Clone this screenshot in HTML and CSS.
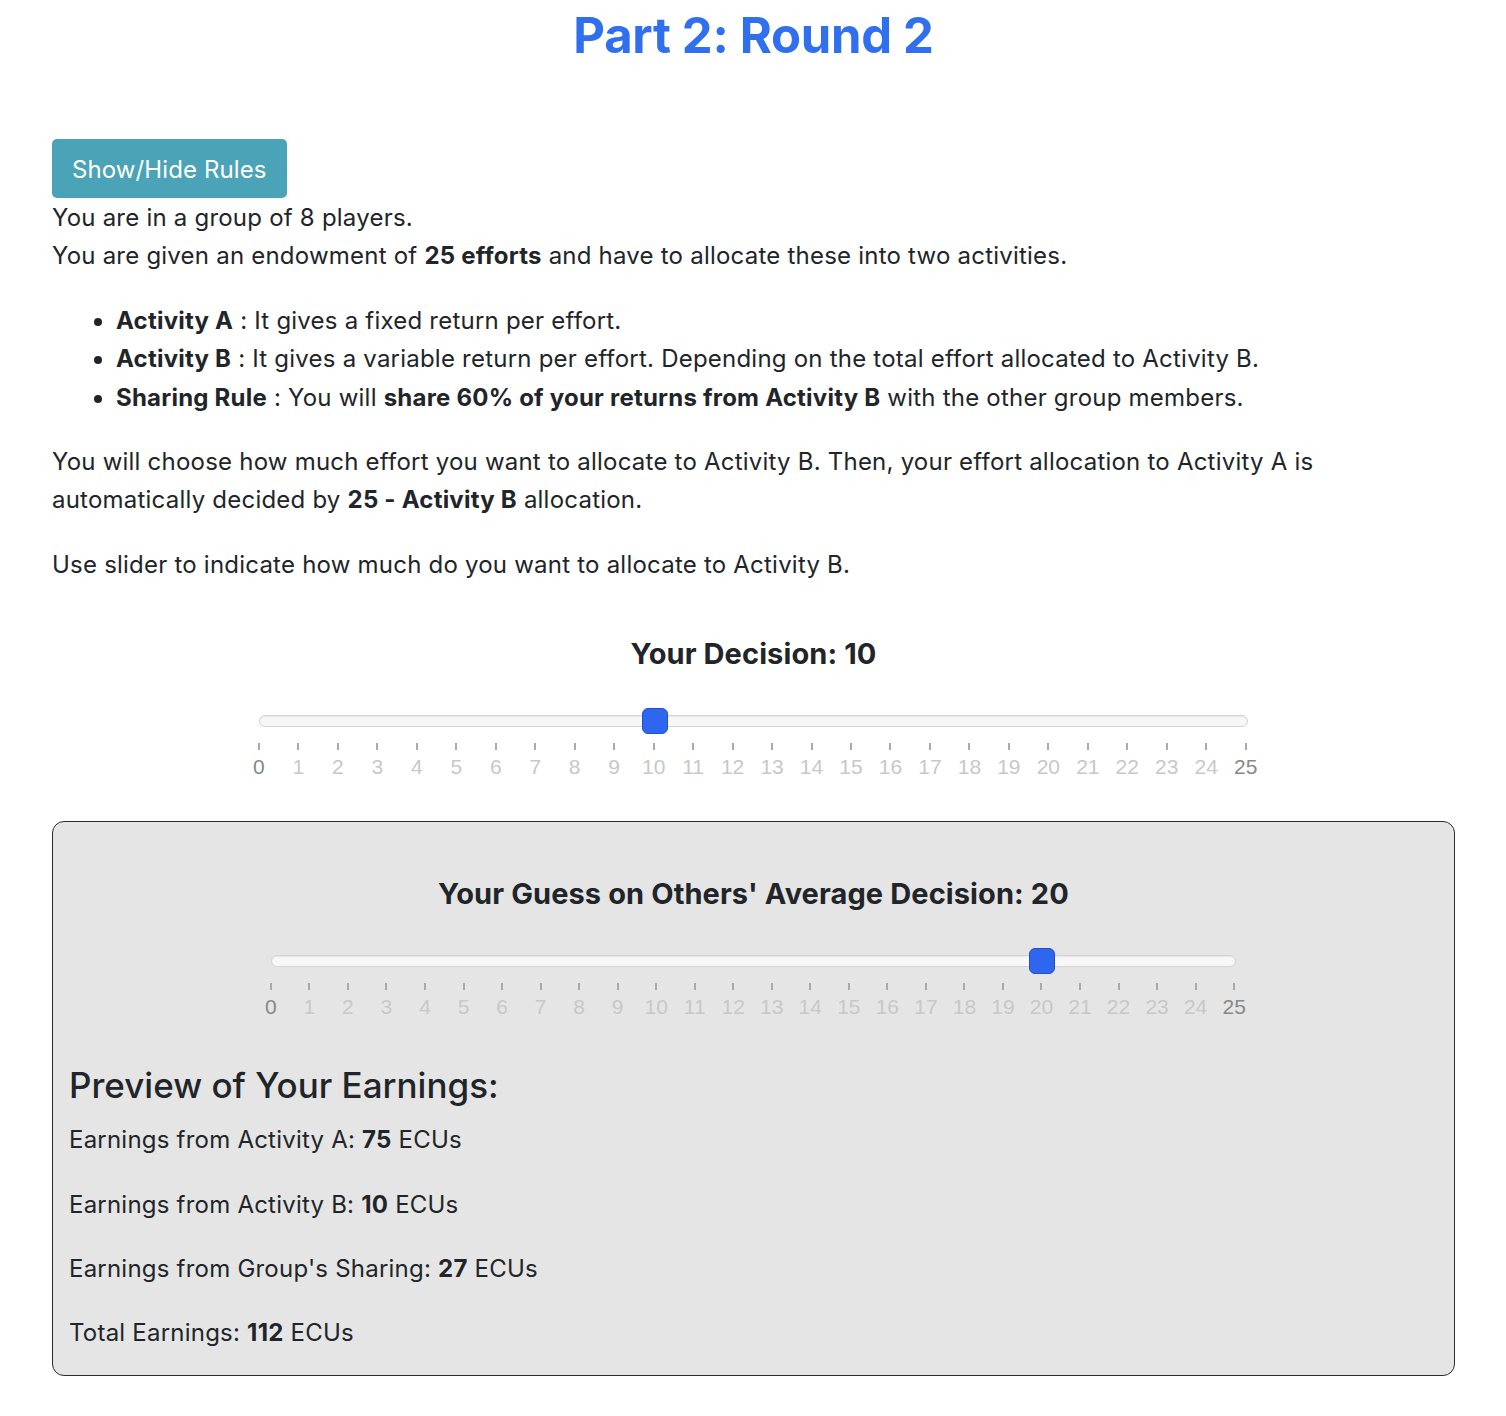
FILE: index.html
```html
<!DOCTYPE html>
<html lang="en">
<head>
<meta charset="utf-8">
<title>Part 2: Round 2</title>
<link rel="stylesheet" href="styles.css">
</head>
<body>
<div class="container">
  <h1 class="page-title">Part 2: Round 2</h1>

  <button class="btn-rules" type="button">Show/Hide Rules</button>

  <div class="rules">
    <p class="intro">You are in a group of 8 players.<br>You are given an endowment of <b>25 efforts</b> and have to allocate these into two activities.</p>
    <ul class="activities">
      <li><b>Activity A</b> : It gives a fixed return per effort.</li>
      <li><b>Activity B</b> : It gives a variable return per effort. Depending on the total effort allocated to Activity B.</li>
      <li><b>Sharing Rule</b> : You will <b>share 60% of your returns from Activity B</b> with the other group members.</li>
    </ul>
    <p>You will choose how much effort you want to allocate to Activity B. Then, your effort allocation to Activity A is automatically decided by <b>25 - Activity B</b> allocation.</p>
    <p>Use slider to indicate how much do you want to allocate to Activity B.</p>
  </div>

  <section class="decision">
    <h2 class="slider-title">Your Decision: <span>10</span></h2>
    <div class="slider">
      <div class="track"><span class="handle" style="left:40%"></span></div>
      <div class="scale" id="scale1"></div>
    </div>
  </section>

  <section class="guess-box">
    <h2 class="slider-title">Your Guess on Others' Average Decision: <span>20</span></h2>
    <div class="slider">
      <div class="track"><span class="handle" style="left:80%"></span></div>
      <div class="scale" id="scale2"></div>
    </div>

    <h3 class="preview-title">Preview of Your Earnings:</h3>
    <p>Earnings from Activity A: <b>75</b> ECUs</p>
    <p>Earnings from Activity B: <b>10</b> ECUs</p>
    <p>Earnings from Group's Sharing: <b>27</b> ECUs</p>
    <p class="last">Total Earnings: <b>112</b> ECUs</p>
  </section>
</div>
<script>
  document.querySelectorAll('.scale').forEach(function (scale) {
    for (var i = 0; i <= 25; i++) {
      var pip = document.createElement('div');
      pip.className = 'pip' + ((i === 0 || i === 25) ? ' pip-end' : '');
      pip.innerHTML = '<span class="tick"></span><span class="num">' + i + '</span>';
      scale.appendChild(pip);
    }
  });
</script>
</body>
</html>
```

FILE: styles.css
```css
* { box-sizing: border-box; }

html, body {
  margin: 0;
  padding: 0;
  background: #ffffff;
}

body {
  font-family: Inter, "Noto Sans", "Liberation Sans", sans-serif;
  font-size: 24px;
  line-height: 38.4px;
  letter-spacing: 0.22px;
  color: #212529;
}

.container {
  padding: 0 51px 0 52px;
}

.page-title {
  margin: 0;
  padding-top: 6px;
  height: 139px;
  text-align: center;
  font-size: 49px;
  line-height: 60px;
  font-weight: 700;
  color: #3070ef;
  letter-spacing: -0.3px;
}

.btn-rules {
  display: block;
  height: 59px;
  padding: 3px 20px 0 20px;
  border: none;
  border-radius: 5px;
  background: #4aa3b6;
  color: #ffffff;
  font-family: inherit;
  font-size: 24px;
  letter-spacing: 0.1px;
  line-height: 56px;
  cursor: pointer;
}

.rules {
  padding-top: 1px;
}

.rules p,
.guess-box p {
  margin: 0 0 26px 0;
}

.guess-box p.last {
  margin-bottom: 22px;
}

.activities {
  margin: 0 0 26px 0;
  padding-left: 64px;
}

b { font-weight: 700; }

.decision {
  padding-top: 28px;
  padding-bottom: 44px;
}

.slider-title {
  margin: 0 0 45px 0;
  text-align: center;
  font-size: 29px;
  line-height: 32px;
  font-weight: 700;
  letter-spacing: 0.1px;
}

.slider {
  width: calc(70% + 7px);
  margin: 0 auto;
}

.track {
  position: relative;
  height: 12px;
  border: 1px solid #d4d4d4;
  border-radius: 6px;
  background: #f7f7f7;
  box-shadow: inset 0 1px 1px #e6e6e6;
}

.handle {
  position: absolute;
  top: 50%;
  width: 26px;
  height: 26px;
  transform: translate(-50%, -50%);
  background: #2f66ef;
  border: 1px solid #2550c4;
  border-radius: 6px;
}

.scale {
  display: flex;
  justify-content: space-between;
  margin-right: 2px;
  padding-top: 16px;
}

.pip {
  width: 0;
  display: flex;
  flex-direction: column;
  align-items: center;
}

.tick {
  width: 2px;
  height: 7px;
  background: #aaaaaa;
}

.num {
  margin-top: 7px;
  font-family: "Liberation Sans", Arial, sans-serif;
  font-size: 21px;
  line-height: 20px;
  letter-spacing: 0;
  color: #c8c8c8;
  white-space: nowrap;
}

.pip-end .num { color: #888888; }

.guess-box {
  border: 1px solid #2b2b2b;
  border-radius: 12px;
  background: #e5e5e5;
  padding: 56px 16px 0 16px;
}

.preview-title {
  margin: 45px 0 13px 0;
  font-size: 35px;
  line-height: 46px;
  font-weight: 500;
  letter-spacing: 0;
}
```
